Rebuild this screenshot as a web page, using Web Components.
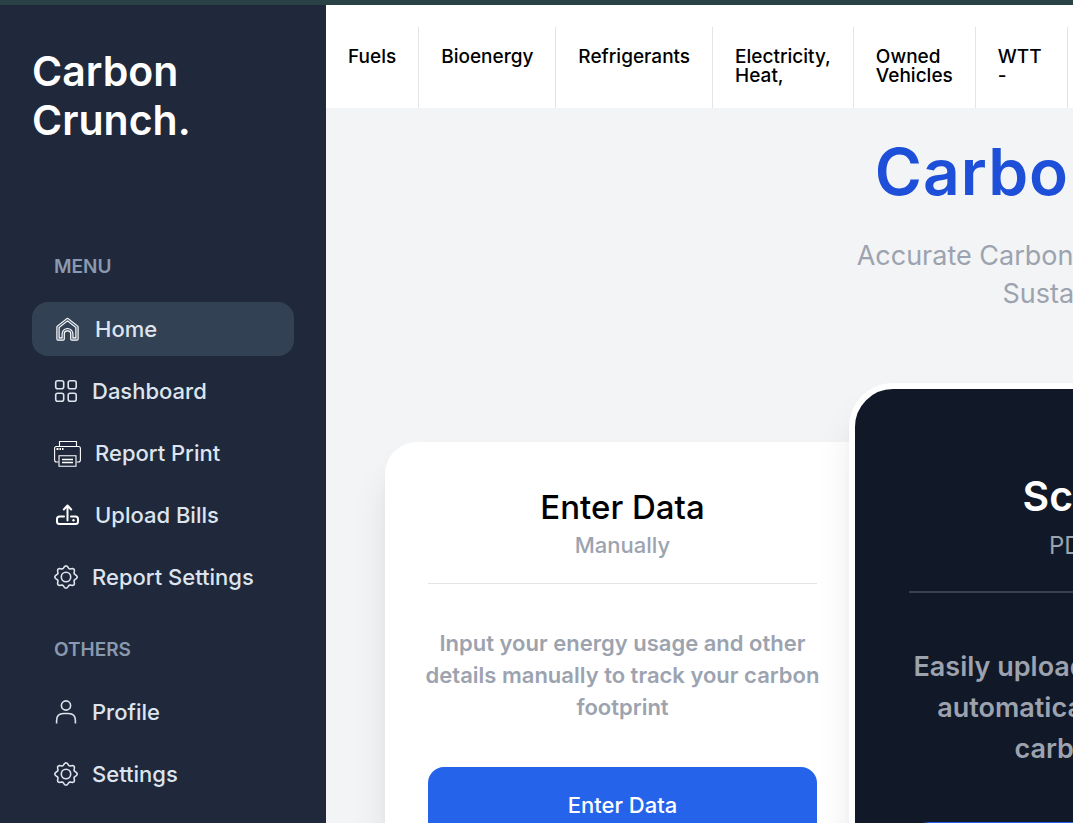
<!DOCTYPE html>
<html lang="en">
<head>
<meta charset="utf-8">
<title>Carbon Crunch</title>
<style>
html{scrollbar-width:none;background:#f2f4f6}
body{margin:0;font-family:Inter,"Liberation Sans",sans-serif}
</style>
</head>
<body>
<cc-app></cc-app>
<script>
// Gear outline with eight rounded teeth, centred in a 24-unit box.
function gearPath() {
  let d = '';
  for (let i = 0; i < 160; i++) {
    const a = i / 160 * Math.PI * 2;
    const r = 10 + 1.15 * Math.cos(8 * a);
    d += (i ? 'L' : 'M') + (12 + r * Math.cos(a)).toFixed(2) + ' ' + (12 + r * Math.sin(a)).toFixed(2);
  }
  return d + 'Z';
}
const HOUSE = 'M4 23V11L13.500 3.500L23 11V23H17.800V18A4.300 4.300 0 0 0 9.200 18V23Z';
const ICONS = {
  home: [27, `<g stroke-linejoin="round"><path d="${HOUSE}" stroke-width="3.400"/><path d="${HOUSE}" stroke="#56647a" stroke-width="1.200"/></g>`],
  grid: [24, '<rect x="1.700" y="1.700" width="8" height="8" rx="2"/><rect x="14.200" y="1.700" width="8" height="8" rx="2"/><rect x="1.700" y="14.200" width="8" height="8" rx="2"/><rect x="14.200" y="14.200" width="8" height="8" rx="2"/>'],
  print: [27, '<g stroke-width="1.100"><path d="M5.500 6.500V1.500H22.500V6.500M4.500 22H2.500Q.600 22 .600 20V8.500Q.600 6.500 2.500 6.500H24.500Q26.400 6.500 26.400 8.500V20Q26.400 22 24.500 22H22.500"/><path d="M5 15.800H22V26.300H5Z"/><path d="M8 19.500H19M8 22.500H19" stroke-width="1.400"/><path d="M2.500 9H4.500M5.500 9H7M8 9H9.500" stroke-width="1.800"/></g>'],
  upload: [27, '<path d="M10 14.500H5.500Q3 14.500 3 17V19.500Q3 22 5.500 22H21.500Q24 22 24 19.500V17Q24 14.500 21.500 14.500H17M13.500 18.500V4M9.800 7.500L13.500 3.500L17.200 7.500" stroke-width="2" stroke-linecap="round" stroke-linejoin="round"/><circle cx="19.500" cy="18.300" r="1.200" fill="currentColor" stroke="none"/>'],
  gear: [24, '<path d="' + gearPath() + '"/><circle cx="12" cy="12" r="4.700"/>'],
  user: [24, '<circle cx="12" cy="5.500" r="4.600"/><path d="M2.600 23.500V20.500Q2.600 13.500 9.500 13.500H14.500Q21.400 13.500 21.400 20.500V23.500"/>']
};

class Base extends HTMLElement {
  constructor() {
    super();
    this.attachShadow({ mode: 'open' }).innerHTML = '<style>*{box-sizing:border-box}' + this.constructor.css + '</style>';
  }
  connectedCallback() {
    if (this.ready) return;
    this.ready = true;
    this.shadowRoot.innerHTML += this.html();
  }
}

class CcIcon extends Base {
  static css = ':host{display:block;flex:none}svg{display:block}:host([name=home]),:host([name=print]),:host([name=upload]){color:#fff}';
  html() {
    const [size, body] = ICONS[this.getAttribute('name')];
    return `<svg width="${size}" height="${size}" viewBox="0 0 ${size} ${size}" fill="none" stroke="currentColor" stroke-width="1.600" aria-hidden="true">${body}</svg>`;
  }
}

class CcItem extends Base {
  static css = `:host{display:block}
    a{display:flex;align-items:center;gap:14px;height:54px;padding:0 22px;border-radius:16px;
      color:#dee4ee;text-decoration:none;font-size:22px;line-height:32px;font-weight:500}
    :host([active]) a{background:#334155}`;
  html() {
    return `<a href="#"><cc-icon name="${this.getAttribute('icon')}"></cc-icon><span><slot></slot></span></a>`;
  }
}

class CcGroup extends Base {
  static css = `:host{display:block}
    h2{margin:0 0 21px;padding:0 22px;font-size:19px;line-height:28px;font-weight:600;color:#8a99af}
    nav{display:grid;gap:8px}`;
  html() {
    return `<h2>${this.getAttribute('label')}</h2><nav aria-label="${this.getAttribute('label')}"><slot></slot></nav>`;
  }
}

class CcSidebar extends Base {
  static css = `:host{display:block;flex:none;width:326px;background:#1f293b;padding:42px 32px 32px}
    a{display:block;width:min-content;color:#fff;text-decoration:none;font-size:41px;line-height:49px;font-weight:600;margin-bottom:108px}
    cc-group + cc-group{margin-top:32px}`;
  html() {
    return `<a href="#">Carbon Crunch.</a>
    <cc-group label="MENU">
      <cc-item icon="home" active>Home</cc-item><cc-item icon="grid">Dashboard</cc-item>
      <cc-item icon="print">Report Print</cc-item><cc-item icon="upload">Upload Bills</cc-item>
      <cc-item icon="gear">Report Settings</cc-item>
    </cc-group>
    <cc-group label="OTHERS">
      <cc-item icon="user">Profile</cc-item><cc-item icon="gear">Settings</cc-item>
    </cc-group>`;
  }
}

class CcTabs extends Base {
  static css = `:host{display:block;background:#fff;padding-top:22px}
    nav{display:flex}
    a{height:81px;padding:20px 22px 0;border-right:1px solid #e2e4e7;color:#000;text-decoration:none;
      font-size:19px;line-height:19px;font-weight:500;white-space:nowrap}
    a:last-child{min-width:92px}`;
  html() {
    return `<nav aria-label="Categories"><a href="#">Fuels</a><a href="#">Bioenergy</a><a href="#">Refrigerants</a><a href="#">Electricity,<br>Heat,</a><a href="#">Owned<br>Vehicles</a><a href="#">WTT<br>-</a></nav>`;
  }
}

class CcHero extends Base {
  static css = `:host{display:block;text-align:center;padding:31px 0 70px}
    h1{margin:0 0 32px;font-size:64px;line-height:66px;font-weight:600;letter-spacing:1px;color:#1d4fd8}
    p{margin:0;font-size:27px;line-height:38px;color:#9ca3af}`;
  html() {
    return `<h1>Carbon Crunch.</h1><p>Accurate Carbon Accounting for a Cleaner<br>Sustainable Futures</p>`;
  }
}

class CcCard extends Base {
  static css = `:host{display:block;text-align:center;background:#fff;border-radius:32px 0 0 32px;padding:43px;
      box-shadow:0 27px 38px -4px rgba(0,0,0,.1),0 11px 14px -8px rgba(0,0,0,.1)}
    header{padding-bottom:22px;border-bottom:1px solid #e2e4e7}
    h2{margin:0;font-size:33px;line-height:44px;font-weight:500;color:#000}
    header p{margin:0;font-size:22px;line-height:32px;font-weight:500;color:#9ca3af}
    .text{margin:43px -6px 44px;font-size:22px;line-height:32px;font-weight:600;color:#9ca3af;white-space:nowrap}
    button{display:block;width:100%;height:76px;border:0;border-radius:16px;background:#2563eb;color:#fff;
      font:500 22px/32px Inter,"Liberation Sans",sans-serif}
    :host([featured]){position:relative;background:#111827;border:6px solid #fff;border-radius:44px;padding:76px 54px 54px}
    :host([featured]) header{padding-bottom:26px;border-bottom:2px solid #374151}
    :host([featured]) h2{font-size:41px;line-height:62px;font-weight:600;color:#fff}
    :host([featured]) header p{font-size:24px;line-height:38px;font-weight:400}
    :host([featured]) .text{margin:53px 0;font-size:27px;line-height:41px}
    :host([featured]) button{height:92px;font-size:27px;border-radius:20px}`;
  html() {
    return `<header><h2>${this.getAttribute('heading')}</h2><p>${this.getAttribute('sub')}</p></header>
      <p class="text"><slot></slot></p><button type="button">${this.getAttribute('action')}</button>`;
  }
}

class CcApp extends Base {
  static css = `:host{display:block;border-top:5px solid #2a4146}
    .shell{display:flex;min-height:calc(100vh - 5px)}
    main{flex:1;min-width:0;overflow-x:clip;background:#f2f4f6}
    .wide{min-width:1604px}
    .cards{display:grid;grid-template-columns:464px 558px 464px;justify-content:center;align-items:start;padding-bottom:60px}
    .side{margin-top:59px;margin-right:-11px}`;
  html() {
    return `<div class="shell"><cc-sidebar></cc-sidebar><main><div class="wide">
      <cc-tabs></cc-tabs><cc-hero></cc-hero>
      <div class="cards">
        <cc-card class="side" heading="Enter Data" sub="Manually" action="Enter Data">Input your energy usage and other<br>details manually to track your carbon<br>footprint</cc-card>
        <cc-card featured heading="Scan Docs" sub="PDF &amp; Images" action="Upload Bills">Easily upload your bills, and we’ll<br>automatically determine your<br>carbon footprints</cc-card>
      </div></div></main></div>`;
  }
}

customElements.define('cc-icon', CcIcon);
customElements.define('cc-item', CcItem);
customElements.define('cc-group', CcGroup);
customElements.define('cc-sidebar', CcSidebar);
customElements.define('cc-tabs', CcTabs);
customElements.define('cc-hero', CcHero);
customElements.define('cc-card', CcCard);
customElements.define('cc-app', CcApp);
</script>
</body>
</html>
